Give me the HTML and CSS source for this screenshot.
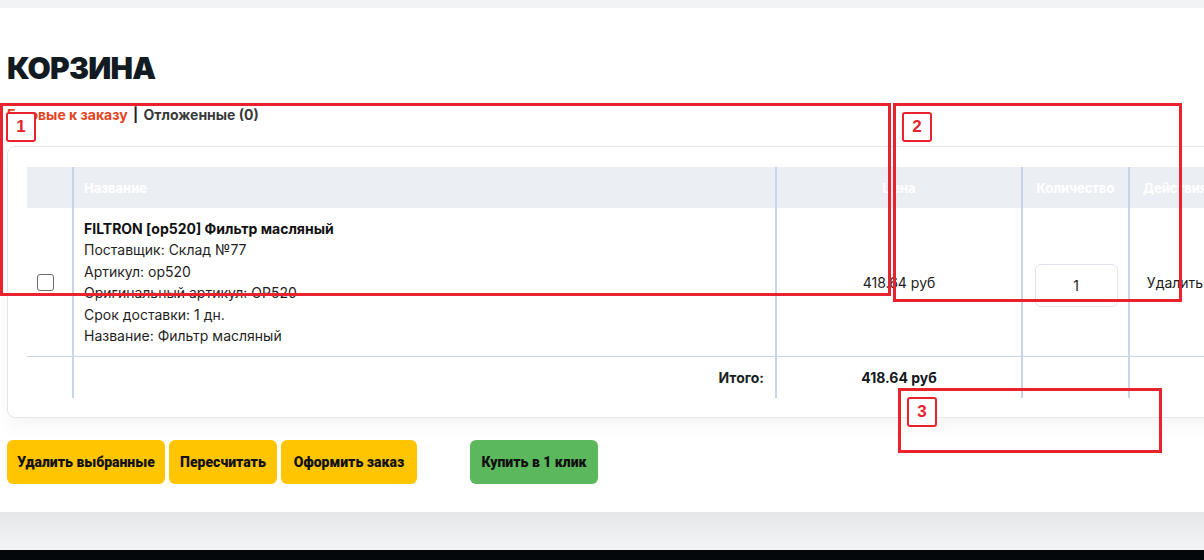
FILE: index.html
```html
<!DOCTYPE html>
<html lang="ru">
<head>
    <meta charset="UTF-8">
    <meta name="viewport" content="width=device-width, initial-scale=1.0">
    <title>Корзина</title>
    <link rel="stylesheet" href="styles.css">
</head>
<body>
    <div class="topbar"></div>

    <main class="page">
        <h1 class="page-title">КОРЗИНА</h1>

        <div class="cart-tabs">
            <a href="#" class="tab tab-active">Готовые к заказу</a>
            <span class="tab-sep">|</span>
            <a href="#" class="tab">Отложенные (0)</a>
        </div>

        <div class="cart-card">
            <table class="cart-table">
                <colgroup>
                    <col class="w-check">
                    <col class="w-name">
                    <col class="w-price">
                    <col class="w-qty">
                    <col class="w-actions">
                </colgroup>
                <thead>
                    <tr>
                        <th></th>
                        <th class="th-name">Название</th>
                        <th>Цена</th>
                        <th>Количество</th>
                        <th>Действия</th>
                    </tr>
                </thead>
                <tbody>
                    <tr class="item-row">
                        <td class="cell-check"><input type="checkbox" class="item-check"></td>
                        <td class="cell-name">
                            <div class="item-title">FILTRON [op520] Фильтр масляный</div>
                            <div>Поставщик: Склад №77</div>
                            <div>Артикул: op520</div>
                            <div>Оригинальный артикул: OP520</div>
                            <div>Срок доставки: 1 дн.</div>
                            <div>Название: Фильтр масляный</div>
                        </td>
                        <td class="cell-center">418.64 руб</td>
                        <td class="cell-center"><input type="text" class="qty-input" value="1"></td>
                        <td class="cell-center"><a href="#" class="remove-link">Удалить</a></td>
                    </tr>
                    <tr class="total-row">
                        <td></td>
                        <td class="total-label">Итого:</td>
                        <td class="cell-center total-sum">418.64 руб</td>
                        <td></td>
                        <td></td>
                    </tr>
                </tbody>
            </table>
        </div>

        <div class="cart-buttons">
            <button class="btn btn-yellow btn-delete">Удалить выбранные</button>
            <button class="btn btn-yellow btn-recalc">Пересчитать</button>
            <button class="btn btn-yellow btn-order">Оформить заказ</button>
            <button class="btn btn-green btn-quick">Купить в 1 клик</button>
        </div>
    </main>

    <div class="footer-fade"></div>
    <div class="footer-dark"></div>

    <!-- review markers -->
    <div class="mark mark-1"><span class="mark-num">1</span></div>
    <div class="mark mark-2"><span class="mark-num">2</span></div>
    <div class="mark mark-3"><span class="mark-num">3</span></div>
</body>
</html>
```

FILE: styles.css
```css
body {
    margin: 0;
    font-family: Inter, "Noto Sans", Arial, sans-serif;
    color: #1c1c1c;
    background: #fff;
    overflow: hidden;
    position: relative;
    width: 1204px;
    height: 560px;
}
.topbar {
    height: 8px;
    background-color: #f2f3f5;
}
.page {
    padding: 0 0 28px 7px;
    background: #fff;
}
.page-title {
    margin: 42px 0 0;
    font-size: 30px;
    line-height: 36px;
    font-weight: 900;
    color: #121a22;
    letter-spacing: -0.8px;
}
.cart-tabs {
    margin-top: 19px;
    font-size: 14px;
    line-height: 20px;
    font-weight: 700;
}
.tab {
    text-decoration: none;
    color: #3a3a3a;
}
.tab-active {
    color: #e4431d;
}
.tab-sep {
    color: #222;
    margin: 0 2px;
}
.cart-card {
    margin-top: 21px;
    width: 1240px;
    box-sizing: border-box;
    padding: 20px 20px 19px 19px;
    border: 1px solid #e3e7ec;
    border-radius: 8px;
    box-shadow: 0 10px 18px rgba(0, 0, 0, 0.04);
}
.cart-table {
    table-layout: fixed;
    border-collapse: separate;
    border-spacing: 0;
    width: 1193px;
    font-size: 14px;
}
.w-check { width: 45px; }
.w-name { width: 703px; }
.w-price { width: 246px; }
.w-qty { width: 107px; }
.w-actions { width: 92px; }
.cart-table th,
.cart-table td {
    padding: 0;
    border-left: 2px solid #c8d4ea;
}
.cart-table th:first-child,
.cart-table td:first-child {
    border-left: none;
}
.cart-table th {
    height: 41px;
    background-color: #ebeff4;
    color: #fff;
    font-size: 13px;
    font-weight: 700;
    text-align: center;
}
.cart-table th.th-name {
    text-align: left;
    padding-left: 10px;
}
.item-row td {
    border-bottom: 1px solid #c8d3e6;
    padding: 10px 0;
    vertical-align: middle;
}
.cart-table td.cell-check {
    padding-left: 10px;
}
.item-check {
    display: block;
    width: 17px;
    height: 17px;
    margin: 0;
    appearance: none;
    border: 1px solid #6b6b6b;
    border-radius: 3px;
    background: #fff;
}
.cart-table td.cell-name {
    padding-left: 10px;
    line-height: 21.4px;
    color: #1f1f1f;
}
.item-title {
    font-weight: 700;
    color: #111;
}
.cell-center {
    text-align: center;
}
.qty-input {
    width: 83px;
    height: 43px;
    box-sizing: border-box;
    border: 1px solid #dfe4ec;
    border-radius: 6px;
    text-align: center;
    font-family: inherit;
    font-size: 14px;
    color: #222;
    margin: 7px 0 0 1px;
}
.remove-link {
    color: #1a1a1a;
    text-decoration: none;
}
.total-row td {
    height: 41px;
    font-weight: 700;
}
.cart-table td.total-label {
    text-align: right;
    padding-right: 11px;
    color: #1b1f24;
}
.total-sum {
    color: #14181c;
}
.cart-buttons {
    margin-top: 22px;
    display: flex;
    gap: 4px;
}
.btn {
    height: 44px;
    border: none;
    border-radius: 6px;
    padding: 0 8px;
    font-family: "Roboto", Arial, sans-serif;
    font-weight: 900;
    font-size: 14px;
    color: #111;
    cursor: pointer;
}
.btn-delete { width: 158px; }
.btn-recalc { width: 108px; }
.btn-order { width: 136px; }
.btn-quick { width: 128px; }
.btn-yellow {
    background-color: #ffc501;
}
.btn-green {
    background-color: #5cb85c;
    margin-left: 49px;
}
.footer-fade {
    height: 38px;
    background: linear-gradient(#e6e7e9, #f3f4f5);
}
.footer-dark {
    height: 12px;
    background-color: #05080b;
}
.mark {
    position: absolute;
    border: 3px solid #e8232d;
    box-sizing: border-box;
}
.mark-1 { left: 0; top: 103px; width: 891px; height: 193px; }
.mark-2 { left: 893px; top: 103px; width: 289px; height: 199px; }
.mark-3 { left: 898px; top: 388px; width: 264px; height: 65px; }
.mark-num {
    position: absolute;
    width: 30px;
    height: 30px;
    box-sizing: border-box;
    border: 2px solid #e8232d;
    border-radius: 3px;
    background: #fff;
    color: #e8232d;
    font-family: Arial, "Liberation Sans", sans-serif;
    font-size: 17px;
    font-weight: 700;
    line-height: 26px;
    text-align: center;
}
.mark-1 .mark-num { left: 3px; top: 6px; }
.mark-2 .mark-num { left: 6px; top: 6px; }
.mark-3 .mark-num { left: 6px; top: 6px; }
```
